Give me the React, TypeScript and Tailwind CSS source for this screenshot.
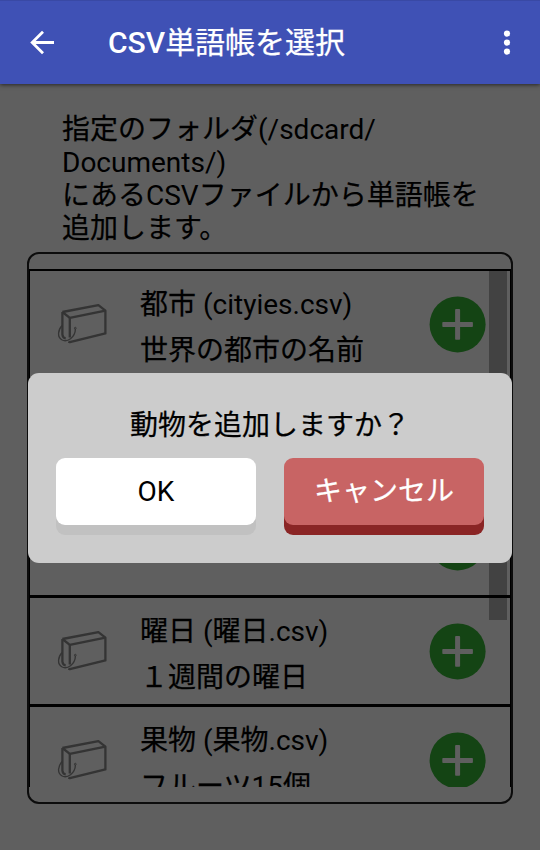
import React from "react";

// Thickens the Japanese glyphs slightly so that they balance with the Latin ones.
function Mixed({ children }: { children: string }) {
  const parts = children.split(/([\u3000-\u9fff\uff00-\uffef]+)/);
  return (
    <>
      {parts.map((part, index) =>
        index % 2 === 1 ? (
          <span key={index} className="[-webkit-text-stroke:0.25px_currentColor]">
            {part}
          </span>
        ) : (
          part
        ),
      )}
    </>
  );
}

function BoxIcon() {
  return (
    <svg width="52" height="44" viewBox="0 0 52 44" fill="none" className="block" stroke="#343434" strokeWidth="2.3" strokeLinejoin="round">
      <path d="M6.4 9 L42.4 2.2 L49.4 7.6 L49.4 30.4 L13.8 39.2 L12.4 38.6" />
      <path d="M6.4 9 L13.8 14.8 L49.4 7.6" />
      <path d="M6.4 9 L6.4 31.5 Q6.7 35 9.7 35.3" />
      <path d="M13.8 14.8 L13.8 34.5" />
      <path d="M6.2 22.5 C1.7 27 1.2 34 5.7 36.8 C11.2 39.8 19.2 34.5 19.4 26" strokeWidth="1.3" />
      <circle cx="19.3" cy="25.2" r="0.9" strokeWidth="1" />
    </svg>
  );
}

function AddButton() {
  return (
    <button className="block h-14 w-14 shrink-0" aria-label="追加">
      <svg width="56" height="56" viewBox="0 0 56 56" className="block overflow-visible">
        <circle cx="27.6" cy="28.4" r="28" fill="#144414" />
        <rect x="12.3" y="26" width="30.6" height="5" rx="0.8" fill="#5f5f5f" />
        <rect x="25.1" y="13.1" width="5" height="30.6" rx="0.8" fill="#5f5f5f" />
      </svg>
    </button>
  );
}

interface Deck {
  title: string;
  note: string;
}

const decks: Deck[] = [
  { title: "都市 (cityies.csv)", note: "世界の都市の名前" },
  { title: "", note: "" },
  { title: "", note: "" },
  { title: "曜日 (曜日.csv)", note: "１週間の曜日" },
  { title: "果物 (果物.csv)", note: "フルーツ15個" },
];

function DeckRow({ deck }: { deck: Deck }) {
  return (
    <li className="flex h-[109px] shrink-0 border-t-3 border-black pl-[26px] first:h-[108px] first:border-t-2">
      <div className="w-[84px] pt-[32px]">
        <BoxIcon />
      </div>
      <div className="w-[289.5px] pt-[11px] leading-[46px] whitespace-nowrap">
        <p className="h-[46px]">
          <Mixed>{deck.title}</Mixed>
        </p>
        <p className="h-[46px]">
          <Mixed>{deck.note}</Mixed>
        </p>
      </div>
      <div className="pt-[25px]">
        <AddButton />
      </div>
    </li>
  );
}

export default function App() {
  return (
    <div className="relative flex h-[850px] w-[540px] flex-col overflow-hidden bg-[#5f5f5f] font-['Roboto','Noto_Sans_CJK_JP',sans-serif] text-[28px] text-black" lang="ja">
      <header className="z-10 flex h-[84px] shrink-0 items-center border-t border-[#3949a5] bg-[#3f51b5] text-white shadow-[0_1px_4px_rgba(0,0,0,0.6)]">
        <svg width="26" height="26" viewBox="0 0 26 26" fill="none" stroke="white" strokeWidth="2.8" className="ml-[29px]">
          <path d="M25 12.5H3.5M14 1.7L3.2 12.5L14 23.3" />
        </svg>
        <h1 className="ml-[53px] text-[30px] leading-[44px] font-medium">
          CSV
          <span className="font-normal">
            <Mixed>単語帳を選択</Mixed>
          </span>
        </h1>
        <svg width="8" height="26" viewBox="0 0 8 26" fill="white" className="mr-[29px] ml-auto">
          <circle cx="4" cy="3.6" r="3.1" />
          <circle cx="4" cy="12.6" r="3.1" />
          <circle cx="4" cy="21.6" r="3.1" />
        </svg>
      </header>

      <p className="mt-[29px] ml-[62px] h-[139px] shrink-0 leading-[33px] whitespace-nowrap">
        <Mixed>指定のフォルダ(/sdcard/</Mixed>
        <br />
        Documents/)
        <br />
        <Mixed>にあるCSVファイルから単語帳を</Mixed>
        <br />
        <Mixed>追加します。</Mixed>
      </p>

      <main className="ml-[27px] h-[552px] w-[486px] shrink-0 rounded-xl border-2 border-[#0c0c0c] pt-[15px]">
        <div className="relative h-[518px] overflow-hidden border-x border-black">
          <ul>
            {decks.map((deck, index) => (
              <DeckRow key={index} deck={deck} />
            ))}
          </ul>
          <div className="absolute top-px right-[3px] h-[350px] w-[18px] bg-black/30" />
        </div>
      </main>

      <div role="dialog" className="absolute top-[373px] left-[28px] h-[190px] w-[484px] rounded-[11px] bg-[#cccccc] px-7 pt-[33px]">
        <p className="h-[52px] text-center leading-[40px]">
          <Mixed>動物を追加しますか？</Mixed>
        </p>
        <div className="flex gap-7">
          <button className="h-[67px] w-[200px] rounded-[9px] bg-white shadow-[0_10px_0_#c1c1c1]">OK</button>
          <button className="h-[67px] w-[200px] rounded-[9px] bg-[#c86464] pt-px text-white shadow-[0_10px_0_#8a2525]">
            <Mixed>キャンセル</Mixed>
          </button>
        </div>
      </div>
    </div>
  );
}
